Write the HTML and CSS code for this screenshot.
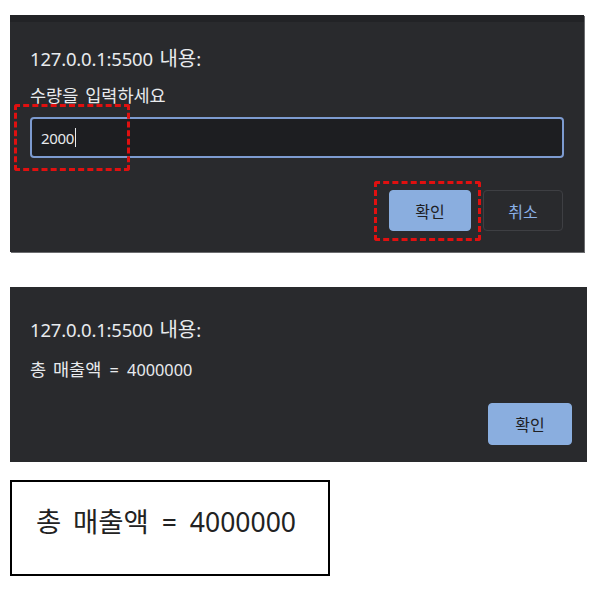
FILE: index.html
```html
<!DOCTYPE html>
<html lang="ko">
<head>
<meta charset="utf-8">
<link rel="stylesheet" href="styles.css">
</head>
<body>
<div class="page">
  <section class="dialog dialog-prompt">
    <div class="topstrip"></div>
    <div class="dlg-body">
      <div class="dlg-title">127.0.0.1:5500 <span class="ko">내용</span>:</div>
      <div class="dlg-msg"><span class="ko">수량을 입력하세요</span></div>
      <div class="dlg-input"><span class="val">2000</span><span class="caret"></span></div>
      <div class="dlg-actions">
        <button class="btn btn-primary">확인</button>
        <button class="btn btn-secondary">취소</button>
      </div>
    </div>
    <div class="mark mark-input"></div>
    <div class="mark mark-ok"></div>
  </section>

  <section class="dialog dialog-alert">
    <div class="dlg-body">
      <div class="dlg-title">127.0.0.1:5500 <span class="ko">내용</span>:</div>
      <div class="dlg-msg"><span class="ko">총 매출액</span> = 4000000</div>
      <div class="dlg-actions">
        <button class="btn btn-primary">확인</button>
      </div>
    </div>
  </section>

  <section class="result"><span class="ko">총 매출액</span> = 4000000</section>
</div>
</body>
</html>
```

FILE: styles.css
```css
html, body {
  margin: 0;
  padding: 0;
  background: #ffffff;
}
body {
  font-family: "Noto Sans", "Noto Sans CJK KR", sans-serif;
}
.ko {
  font-family: "Noto Sans CJK KR", sans-serif;
}
.page {
  display: flex;
  flex-direction: column;
  align-items: flex-start;
  padding: 15px 0 0 10px;
}
.dialog {
  position: relative;
  background: #292a2d;
  color: #e8eaed;
  box-sizing: border-box;
}
.dialog-prompt {
  width: 574px;
  height: 237px;
  box-shadow: 1px 1px 0 #6b6c6f;
}
.topstrip {
  height: 7px;
  background: #222326;
}
.dlg-body {
  padding: 0 20px;
  display: flex;
  flex-direction: column;
}
.dlg-title {
  font-size: 18.5px;
  line-height: 24px;
  letter-spacing: -0.2px;
  word-spacing: 2px;
}
.dlg-title .ko {
  font-size: 20px;
  letter-spacing: 0;
}
.dialog-prompt .dlg-title {
  margin-top: 24px;
}
.dlg-msg {
  font-size: 16.3px;
  line-height: 22px;
  margin-top: 13px;
  word-spacing: 4px;
}
.dlg-msg .ko {
  font-size: 17.5px;
  word-spacing: 2px;
}
.dlg-input {
  margin-top: 10px;
  height: 41px;
  width: 534px;
  box-sizing: border-box;
  border: 2px solid #7d9bd0;
  border-radius: 4px;
  background: #1d1e21;
  display: flex;
  align-items: center;
  padding-left: 9px;
  font-size: 15px;
  letter-spacing: -0.3px;
  color: #e8eaed;
}
.caret {
  display: inline-block;
  width: 1px;
  height: 19px;
  background: #e8eaed;
  margin-left: 1px;
}
.dlg-actions {
  display: flex;
  justify-content: flex-end;
  gap: 12px;
}
.dialog-prompt .dlg-actions {
  margin-top: 32px;
  padding-right: 1px;
}
.btn {
  font-family: "Noto Sans CJK KR", sans-serif;
  font-size: 16px;
  height: 41px;
  border-radius: 4px;
  box-sizing: border-box;
  padding: 0;
}
.btn-primary {
  width: 82px;
  background: #8aaedf;
  border: 1px solid #8aaedf;
  color: #202124;
}
.btn-secondary {
  width: 80px;
  background: transparent;
  border: 1px solid #3e3f43;
  color: #8ab0e6;
}
.mark {
  position: absolute;
  border: 3px dashed #e01010;
  border-radius: 3px;
}
.mark-input {
  left: 4px;
  top: 89px;
  width: 110px;
  height: 61px;
}
.mark-ok {
  left: 364px;
  top: 166px;
  width: 101px;
  height: 54px;
}
.dialog-alert {
  margin-top: 35px;
  width: 577px;
  height: 175px;
}
.dialog-alert .dlg-title {
  margin-top: 30px;
}
.dialog-alert .dlg-msg {
  margin-top: 16px;
}
.dialog-alert .dlg-actions {
  margin-top: 22px;
  margin-right: -5px;
}
.dialog-alert .btn-primary {
  width: 84px;
  height: 42px;
}
.result {
  margin-top: 18px;
  width: 320px;
  height: 96px;
  box-sizing: border-box;
  border: 2px solid #000;
  font-size: 26.5px;
  color: #222;
  padding: 20px 0 0 24px;
  line-height: 36px;
  word-spacing: 6px;
}
.result .ko {
  font-size: 27.5px;
  word-spacing: 4px;
}
```
